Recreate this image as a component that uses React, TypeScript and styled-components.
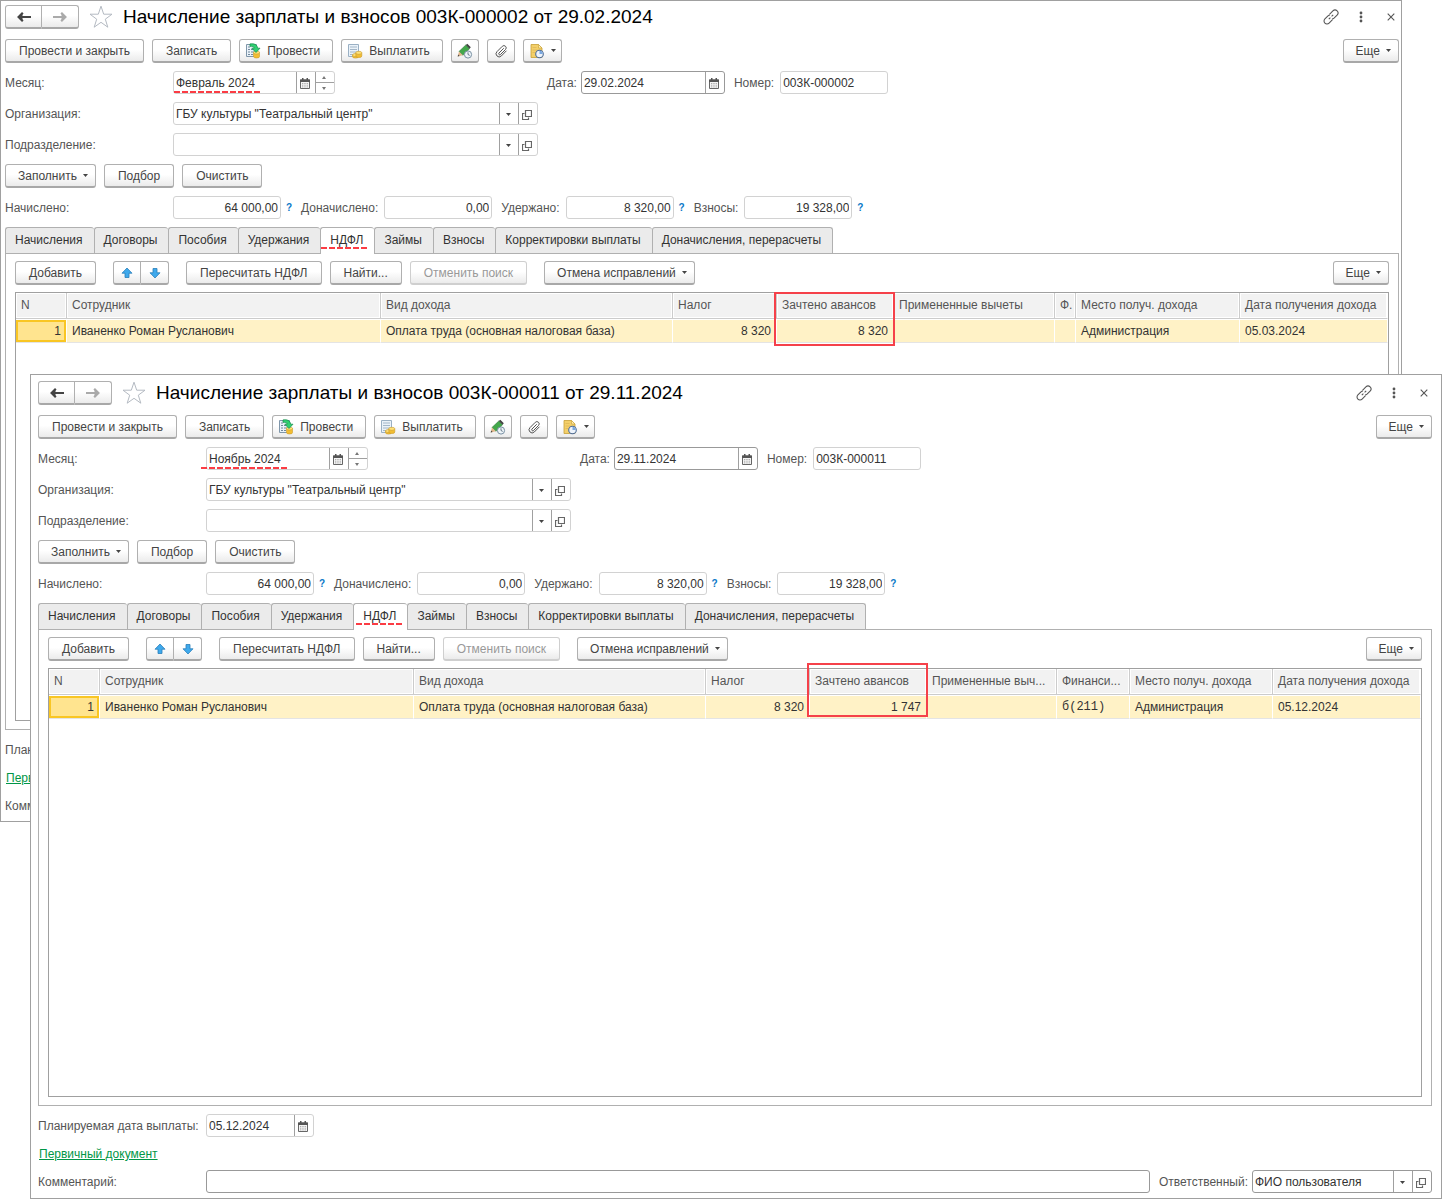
import React, { useId } from "react";
import styled, { createGlobalStyle, css } from "styled-components";

const GlobalStyle = createGlobalStyle`
  *, *::before, *::after { box-sizing: border-box; }
  body { margin: 0; background: #fff; }
  body, button, input, select {
    font-family: "Liberation Sans", Arial, sans-serif;
    font-size: 12px;
    line-height: 16px;
    color: #333;
  }
`;

/* ---------- desktop and windows ---------- */

const Desktop = styled.main`
  display: grid;
  grid-template-columns: minmax(0, 1fr);
`;

const Window = styled.section<{ $front?: boolean }>`
  grid-area: 1 / 1;
  align-self: start;
  isolation: isolate;
  z-index: ${(p) => (p.$front ? 2 : 1)};
  display: flex;
  flex-direction: column;
  gap: 8px;
  background: #fff;
  border: 1px solid #a0a0a0;
  ${(p) =>
    p.$front
      ? css`
          margin: 374px 0 0 30px;
          padding: 4px 9px 5px 7px;
        `
      : css`
          margin: 0 40px 0 0;
          padding: 2px 2px 4px 4px;
        `}
`;

const Header = styled.header`
  display: flex;
  align-items: center;
  height: 28px;
`;

const Title = styled.h1`
  margin: 0;
  flex: 1;
  font-size: 19px;
  line-height: 24px;
  font-weight: 400;
  color: #000;
  white-space: nowrap;
`;

const IconButton = styled.button`
  display: flex;
  align-items: center;
  justify-content: center;
  width: 30px;
  height: 24px;
  padding: 0;
  border: 0;
  background: none;
`;

const StarButton = styled(IconButton)`
  width: 44px;
`;

const WindowTools = styled.div`
  display: flex;
  margin-right: -7px;
`;

/* ---------- buttons ---------- */

const Row = styled.div`
  display: flex;
  align-items: center;
  gap: 8px;
`;

const Spacer = styled.div`
  flex: 1;
`;

const Button = styled.button<{ $menu?: boolean; $icon?: boolean }>`
  display: inline-flex;
  align-items: center;
  justify-content: center;
  flex: none;
  gap: 6px;
  min-width: 28px;
  height: 24px;
  padding: ${(p) => (p.$menu ? "0 7px 0 12px" : p.$icon ? "0 5px" : "0 13px")};
  border: 1px solid #b0b0b0;
  border-bottom: 2px solid #a8a8a8;
  border-radius: 3px;
  background: linear-gradient(#fff 45%, #ebebeb);
  color: #444;
  white-space: nowrap;

  &:disabled {
    color: #999;
    border-color: #cfcfcf;
  }
`;

const LabeledIconButton = styled(Button)`
  padding: 0 12px 0 5px;
`;

const ButtonPair = styled.div<{ $narrow?: boolean }>`
  display: flex;
  margin: ${(p) => (p.$narrow ? "0 9px" : "0")};

  ${Button} {
    width: ${(p) => (p.$narrow ? "28px" : "37px")};
    padding: 0;
  }
  ${Button}:first-child {
    border-top-right-radius: 0;
    border-bottom-right-radius: 0;
  }
  ${Button}:last-child {
    border-left: 0;
    border-top-left-radius: 0;
    border-bottom-left-radius: 0;
  }
`;

const SpacedButton = styled(Button)`
  margin-left: 9px;
`;

/* ---------- fields ---------- */

const FormRow = styled.div`
  display: flex;
  align-items: center;
  height: 23px;
`;

const Label = styled.label<{ $lead?: boolean; $loose?: boolean }>`
  flex: none;
  width: ${(p) => (p.$lead ? "168px" : "auto")};
  margin-left: ${(p) => (p.$lead ? "0" : "9px")};
  margin-right: ${(p) => (p.$lead ? "0" : p.$loose ? "6px" : "4px")};
  color: #555;
  white-space: nowrap;
`;

const FieldBox = styled.div<{ $w?: number; $dark?: boolean }>`
  position: relative;
  display: flex;
  flex: ${(p) => (p.$w ? "none" : "1")};
  width: ${(p) => (p.$w ? `${p.$w}px` : "auto")};
  height: 23px;
  border: 1px solid ${(p) => (p.$dark ? "#999" : "#d2d2d2")};
  border-radius: 3px;
  background: #fff;
`;

const MonthArea = styled.div`
  width: 365px;
`;

const Input = styled.input<{ $right?: boolean }>`
  flex: 1;
  min-width: 0;
  height: 21px;
  padding: 0 2px;
  border: 0;
  outline: 0;
  background: none;
  text-align: ${(p) => (p.$right ? "right" : "left")};
`;

const SelectGrid = styled.div`
  flex: 1;
  display: grid;
  grid-template-columns: 1fr 19px;
`;

const Select = styled.select`
  grid-area: 1 / 1 / 2 / 3;
  appearance: none;
  height: 21px;
  padding: 0 22px 0 2px;
  border: 0;
  outline: 0;
  background: none;
`;

const SelectArrow = styled.span`
  grid-area: 1 / 2;
  display: flex;
  align-items: center;
  justify-content: center;
  padding: 1px 2px 0 0;
  border-left: 1px solid #a0a0a0;
  pointer-events: none;
`;

const FieldButton = styled.button`
  display: flex;
  align-items: center;
  justify-content: center;
  width: 19px;
  padding: 2px 2px 0 0;
  border: 0;
  border-left: 1px solid #a0a0a0;
  background: none;
`;

const Stepper = styled.div`
  display: grid;
  grid-template-rows: 11px 10px;
  width: 19px;
  border-left: 1px solid #a0a0a0;
`;

const StepButton = styled.button`
  display: flex;
  align-items: center;
  justify-content: center;
  padding: 1px 2px 0 0;
  border: 0;
  background: none;

  &:first-child {
    border-bottom: 1px solid #a0a0a0;
  }
`;

const Help = styled.button`
  width: 11px;
  padding: 0;
  border: 0;
  background: none;
  color: #0a78c8;
  font-size: 10px;
  font-weight: 700;
  text-align: right;
`;

const DashMark = styled.span<{ $x: number; $w: number }>`
  position: absolute;
  left: ${(p) => p.$x}px;
  bottom: 0;
  width: ${(p) => p.$w}px;
  height: 2px;
  background: repeating-linear-gradient(90deg, #fb3c44 0 6px, transparent 6px 8px);
`;

/* ---------- tabs and panel ---------- */

const TabBlock = styled.div`
  display: flex;
  flex-direction: column;
`;

const TabList = styled.div`
  display: flex;
  height: 26px;
`;

const Tab = styled.button<{ $active?: boolean }>`
  position: relative;
  flex: none;
  height: ${(p) => (p.$active ? "27px" : "26px")};
  padding: ${(p) => (p.$active ? "0 11px 2px 9px" : "0 11px 1px 9px")};
  border: 1px solid #b0b0b0;
  border-width: 1px 0 0 1px;
  border-radius: 3px 3px 0 0;
  background: ${(p) => (p.$active ? "#fff" : "#ebebeb")};
  white-space: nowrap;

  &:last-child {
    border-right-width: 1px;
  }
`;

const TabMark = styled(DashMark)`
  bottom: 5px;
`;

const Panel = styled.div`
  display: flex;
  flex-direction: column;
  gap: 7px;
  padding: 7px 9px 8px;
  border: 1px solid #b0b0b0;
`;

const TableBox = styled.div`
  min-height: 429px;
  border: 1px solid #a0a0a0;
`;

const Table = styled.table`
  width: 100%;
  table-layout: fixed;
  border-collapse: separate;
  border-spacing: 0;
`;

const HeadCell = styled.th`
  position: relative;
  height: 26px;
  padding: 0 4px 2px 5px;
  border-right: 1px solid #ccc;
  border-bottom: 1px solid #ccc;
  background: #f2f2f2;
  box-shadow: inset 0 0 0 1px #fff;
  color: #555;
  font-weight: 400;
  text-align: left;
  white-space: nowrap;

  &:last-child {
    border-right-color: #fff;
  }
`;

const Cell = styled.td<{ $right?: boolean; $mono?: boolean }>`
  height: 24px;
  padding: 0 5px;
  border-right: 1px solid #fff;
  border-bottom: 1px solid #e4e4e4;
  background: #fff2c6;
  box-shadow: inset 0 1px #fff;
  text-align: ${(p) => (p.$right ? "right" : "left")};
  white-space: nowrap;
  ${(p) => p.$mono && css`font-family: "Liberation Mono", monospace;`}
`;

const CurrentCell = styled(Cell)`
  background: #ffe48f;
  box-shadow: inset 0 1px #fff, inset 0 0 0 2px #f9c623, inset 0 3px #f9c623;
`;

const Highlight = styled.span<{ $raised?: boolean }>`
  position: absolute;
  z-index: 1;
  top: ${(p) => (p.$raised ? "-6px" : "-1px")};
  left: -3px;
  right: -2px;
  height: 54px;
  border: 2px solid #f5414a;
  pointer-events: none;
`;

/* ---------- footer ---------- */

const LinkRow = styled.div`
  height: 17px;
  padding: 1px 0 0 1px;
`;

const DocLink = styled.a`
  color: #009646;
`;

/* ---------- icons ---------- */

const Caret = () => (
  <svg width="5" height="3" viewBox="0 0 5 3" aria-hidden>
    <path d="M0 0h5L2.5 3z" fill="#444" />
  </svg>
);

const StepIcon = ({ down }: { down?: boolean }) => (
  <svg width="4" height="3" viewBox="0 0 4 3" aria-hidden>
    <path d={down ? "M0 0h4L2 3z" : "M0 3h4L2 0z"} fill="#777" />
  </svg>
);

const NavArrow = ({ forward }: { forward?: boolean }) => (
  <svg width="16" height="12" viewBox="0 0 16 12" aria-hidden>
    <path
      d="M15 6H4M6.800 1.800 2.600 6 6.800 10.200"
      transform={forward ? "rotate(180 8 6)" : undefined}
      fill="none"
      stroke={forward ? "#aaa" : "#444"}
      strokeWidth="2.2"
    />
    <path
      d="M2 6 6.500 2.500v7z"
      transform={forward ? "rotate(180 8 6)" : undefined}
      fill={forward ? "#aaa" : "#444"}
    />
  </svg>
);

const Star = () => (
  <svg width="24" height="24" viewBox="0 0 24 24" aria-hidden>
    <path
      d="M12 1.2 14.7 9.2H23L16.3 14.2 18.8 22.2 12 17.3 5.2 22.2 7.7 14.2 1 9.2H9.3z"
      fill="#fff"
      stroke="#b4bac2"
      strokeWidth="1"
    />
  </svg>
);

const ChainIcon = () => (
  <svg width="16" height="16" viewBox="0 0 16 16" fill="none" stroke="#555" strokeWidth="1.1" aria-hidden>
    <path d="M6.500 5.300 9.900 1.900a2.900 2.900 0 0 1 4.200 4.200L11 9.200a2.900 2.900 0 0 1-2 .8" />
    <path d="M9.500 10.700 6.100 14.100a2.900 2.900 0 0 1-4.200-4.200L5 6.800a2.900 2.900 0 0 1 2-.8" />
    <path d="M5.800 10.200 7.400 8.600M8.600 7.400 10.200 5.800" />
  </svg>
);

const DotsIcon = () => (
  <svg width="4" height="12" viewBox="0 0 4 12" fill="#555" aria-hidden>
    <circle cx="2" cy="2" r="1.4" />
    <circle cx="2" cy="6" r="1.4" />
    <circle cx="2" cy="10" r="1.4" />
  </svg>
);

const CloseIcon = () => (
  <svg width="8" height="8" viewBox="0 0 8 8" stroke="#555" strokeWidth="1.1" aria-hidden>
    <path d="M.7.7l6.6 6.6M7.3.7.7 7.3" />
  </svg>
);

const Sheet = () => (
  <>
    <path d="M1.5 1.5h10v12h-10z" fill="#eaf2f9" stroke="#9ab0c4" />
    <path d="M3 4h7M3 6.500h7M3 9h7M3 11.500h6" stroke="#a3b6c8" strokeWidth="1" />
  </>
);

const Coins = ({ x, y, rows }: { x: number; y: number; rows: number }) => (
  <g stroke="#c99a2c" strokeWidth=".6">
    <path d={`M${x} ${y}v${rows}a3 1.500 0 0 0 6 0v-${rows}z`} fill="#f2bd32" />
    <ellipse cx={x + 3} cy={y} rx="3" ry="1.500" fill="#ffe27a" />
  </g>
);

const PostIcon = () => (
  <svg width="16" height="16" viewBox="0 0 16 16" aria-hidden>
    <path d="M1.500 1.500h10v12h-10z" fill="#eaf2f9" stroke="#7f96aa" />
    <path d="M3 4h2M3 6.500h2M3 9h2M3 11.500h2M6 6.500h3M6 9h3M6 11.500h2" stroke="#71889c" />
    <Coins x={8.5} y={9.5} rows={4} />
    <path d="M5 .900c4-.6 7.300.6 7.600 4.300H15L11 9.500 6.800 5.200h2.400C9 3.700 7.600 3.200 5 3.400z" fill="#2fd070" stroke="#128a49" strokeWidth=".7" />
  </svg>
);

const PayIcon = () => (
  <svg width="16" height="16" viewBox="0 0 16 16" aria-hidden>
    <Sheet />
    <Coins x={5.5} y={12} rows={1.6} />
    <Coins x={8.8} y={9.8} rows={3.2} />
  </svg>
);

const PencilClockIcon = () => (
  <svg width="16" height="16" viewBox="0 0 16 16" aria-hidden>
    <path d="M2 8.500 8.800 2l3.700 3.700-6.700 6.600z" fill="#43a84b" stroke="#2a7434" strokeWidth=".6" />
    <path d="M8.800 2 10.300.7l3.500 3.600-1.300 1.400z" fill="#444" />
    <path d="M2 8.500.7 13.400 5.800 12.300z" fill="#e2b68a" />
    <path d="M.7 13.400 1.200 11.600 2.600 13z" fill="#444" />
    <circle cx="11" cy="11.500" r="3.600" fill="#eef4f8" stroke="#7890a2" />
    <path d="M11 9.300v2.200l1.700.9" fill="none" stroke="#566b7c" strokeWidth=".9" />
  </svg>
);

const ClipIcon = () => (
  <svg width="14" height="14" viewBox="0 0 14 14" fill="none" stroke="#555" strokeWidth="1" strokeLinecap="round" aria-hidden>
    <path d="M9.500 4.500 5 9a1 1 0 0 0 1.500 1.500l5-5a2.200 2.200 0 0 0-3.200-3.200L3 7.600A3 3 0 0 0 7.300 12l4.900-5" />
  </svg>
);

const NoteClockIcon = () => (
  <svg width="16" height="16" viewBox="0 0 16 16" aria-hidden>
    <path d="M2 1.500h7.500L13 5v9.500H2z" fill="#f3cf69" stroke="#c79f35" strokeWidth=".8" />
    <path d="M9.500 1.500V5H13z" fill="#fff0b4" stroke="#c79f35" strokeWidth=".6" />
    <path d="M3.500 4.500h4M3.500 7h5M3.500 9.500h3" stroke="#e3bc5a" />
    <circle cx="10.500" cy="11" r="3.800" fill="#edf3fb" stroke="#4c6b96" strokeWidth="1.100" />
    <path d="M10.500 11V7.800a3.200 3.200 0 0 1 3.200 3.200z" fill="#7aa8e0" />
  </svg>
);

const CalendarIcon = () => (
  <svg width="10" height="11" viewBox="0 0 10 11" aria-hidden>
    <path d="M.5 2h9v8.500h-9z" fill="#f4f4f4" stroke="#666" />
    <path d="M0 1.500h10V4H0zM2 0h1.500v2H2zM6.500 0H8v2H6.500z" fill="#555" />
    <path d="M2 5.500h6M2 7.200h6M2 8.900h6" stroke="#aaa" strokeDasharray="1 .7" />
  </svg>
);

const OpenIcon = () => (
  <svg width="10" height="10" viewBox="0 0 10 10" fill="none" stroke="#666" aria-hidden>
    <path d="M3.500.5h6v6h-6z" strokeWidth="1.200" />
    <path d="M2.500 3.500h-2v6h6v-2" strokeWidth="1.200" />
  </svg>
);

const BlueArrow = ({ down }: { down?: boolean }) => (
  <svg width="12" height="12" viewBox="0 0 12 12" aria-hidden>
    <path
      d="M6 1 11 6.200H8V10.500H4V6.200H1z"
      transform={down ? "rotate(180 6 6)" : undefined}
      fill="#3fa9ec"
      stroke="#2a7fba"
      strokeWidth=".8"
      strokeLinejoin="round"
    />
  </svg>
);

/* ---------- form parts ---------- */

type SelectFieldProps = { id: string; value: string; width: number; dark?: boolean };

const SelectField = ({ id, value, width, dark }: SelectFieldProps) => (
  <FieldBox $w={width} $dark={dark}>
    <SelectGrid>
      <Select id={id} defaultValue={value}>
        <option value={value}>{value}</option>
      </Select>
      <SelectArrow>
        <Caret />
      </SelectArrow>
    </SelectGrid>
    <FieldButton aria-label="Открыть">
      <OpenIcon />
    </FieldButton>
  </FieldBox>
);

type DateFieldProps = { id: string; value: string; width: number; dark?: boolean };

const DateField = ({ id, value, width, dark }: DateFieldProps) => (
  <FieldBox $w={width} $dark={dark}>
    <Input id={id} defaultValue={value} />
    <FieldButton aria-label="Выбрать дату">
      <CalendarIcon />
    </FieldButton>
  </FieldBox>
);

type Total = { label: string; value: string; help?: boolean };

const totals: Total[] = [
  { label: "Начислено:", value: "64 000,00", help: true },
  { label: "Доначислено:", value: "0,00" },
  { label: "Удержано:", value: "8 320,00", help: true },
  { label: "Взносы:", value: "19 328,00", help: true },
];

const tabs = [
  "Начисления",
  "Договоры",
  "Пособия",
  "Удержания",
  "НДФЛ",
  "Займы",
  "Взносы",
  "Корректировки выплаты",
  "Доначисления, перерасчеты",
];

type Mark = { x: number; w: number };

type Doc = {
  number: string;
  date: string;
  month: string;
  payDate: string;
  advances: string;
  finance: string;
  financeHead: string;
  deductionsHead: string;
  deductionsWidth: number;
  financeWidth: number;
  placeWidth: number;
  monthMark: Mark;
  tabMark: Mark;
};

const february: Doc = {
  number: "003К-000002",
  date: "29.02.2024",
  month: "Февраль 2024",
  payDate: "05.03.2024",
  advances: "8 320",
  finance: "",
  financeHead: "Ф.",
  deductionsHead: "Примененные вычеты",
  deductionsWidth: 161,
  financeWidth: 21,
  placeWidth: 164,
  monthMark: { x: 0, w: 86 },
  tabMark: { x: 0, w: 46 },
};

const november: Doc = {
  number: "003К-000011",
  date: "29.11.2024",
  month: "Ноябрь 2024",
  payDate: "05.12.2024",
  advances: "1 747",
  finance: "б(211)",
  financeHead: "Финанси...",
  deductionsHead: "Примененные выч...",
  deductionsWidth: 130,
  financeWidth: 73,
  placeWidth: 143,
  monthMark: { x: -6, w: 86 },
  tabMark: { x: 2, w: 46 },
};

const DocumentWindow = ({ doc, front }: { doc: Doc; front?: boolean }) => {
  const id = useId();
  return (
    <Window $front={front}>
      <Header>
        <ButtonPair>
          <Button aria-label="Назад">
            <NavArrow />
          </Button>
          <Button aria-label="Вперед">
            <NavArrow forward />
          </Button>
        </ButtonPair>
        <StarButton aria-label="В избранное">
          <Star />
        </StarButton>
        <Title>
          Начисление зарплаты и взносов {doc.number} от {doc.date}
        </Title>
        <WindowTools>
          <IconButton aria-label="Ссылка">
            <ChainIcon />
          </IconButton>
          <IconButton aria-label="Меню">
            <DotsIcon />
          </IconButton>
          <IconButton aria-label="Закрыть">
            <CloseIcon />
          </IconButton>
        </WindowTools>
      </Header>

      <Row>
        <Button>Провести и закрыть</Button>
        <Button>Записать</Button>
        <LabeledIconButton>
          <PostIcon />
          Провести
        </LabeledIconButton>
        <LabeledIconButton>
          <PayIcon />
          Выплатить
        </LabeledIconButton>
        <Button $icon aria-label="Отложить">
          <PencilClockIcon />
        </Button>
        <Button $icon aria-label="Файлы">
          <ClipIcon />
        </Button>
        <Button $icon aria-label="Создать на основании">
          <NoteClockIcon />
          <Caret />
        </Button>
        <Spacer />
        <Button $menu>
          Еще <Caret />
        </Button>
      </Row>

      <FormRow>
        <Label $lead htmlFor={`${id}month`}>
          Месяц:
        </Label>
        <MonthArea>
          <FieldBox $w={162}>
            <Input id={`${id}month`} defaultValue={doc.month} />
            <FieldButton aria-label="Выбрать месяц">
              <CalendarIcon />
            </FieldButton>
            <Stepper>
              <StepButton aria-label="Следующий месяц">
                <StepIcon />
              </StepButton>
              <StepButton aria-label="Предыдущий месяц">
                <StepIcon down />
              </StepButton>
            </Stepper>
            <DashMark $x={doc.monthMark.x} $w={doc.monthMark.w} />
          </FieldBox>
        </MonthArea>
        <Label htmlFor={`${id}date`}>Дата:</Label>
        <DateField id={`${id}date`} value={doc.date} width={144} dark />
        <Label $loose htmlFor={`${id}number`}>
          Номер:
        </Label>
        <FieldBox $w={108}>
          <Input id={`${id}number`} defaultValue={doc.number} />
        </FieldBox>
      </FormRow>

      <FormRow>
        <Label $lead htmlFor={`${id}org`}>
          Организация:
        </Label>
        <SelectField id={`${id}org`} value={'ГБУ культуры "Театральный центр"'} width={365} />
      </FormRow>

      <FormRow>
        <Label $lead htmlFor={`${id}unit`}>
          Подразделение:
        </Label>
        <SelectField id={`${id}unit`} value="" width={365} />
      </FormRow>

      <Row>
        <Button $menu>
          Заполнить <Caret />
        </Button>
        <Button>Подбор</Button>
        <Button>Очистить</Button>
      </Row>

      <FormRow>
        {totals.map((t, i) => (
          <React.Fragment key={t.label}>
            <Label $lead={i === 0} $loose htmlFor={`${id}total${i}`}>
              {t.label}
            </Label>
            <FieldBox $w={108}>
              <Input id={`${id}total${i}`} $right readOnly value={t.value} />
            </FieldBox>
            {t.help && <Help>?</Help>}
          </React.Fragment>
        ))}
      </FormRow>

      <TabBlock>
        <TabList role="tablist">
          {tabs.map((name) => (
            <Tab key={name} role="tab" aria-selected={name === "НДФЛ"} $active={name === "НДФЛ"}>
              {name}
              {name === "НДФЛ" && <TabMark $x={doc.tabMark.x} $w={doc.tabMark.w} />}
            </Tab>
          ))}
        </TabList>
        <Panel role="tabpanel">
          <Row>
            <Button>Добавить</Button>
            <ButtonPair $narrow>
              <Button aria-label="Вверх">
                <BlueArrow />
              </Button>
              <Button aria-label="Вниз">
                <BlueArrow down />
              </Button>
            </ButtonPair>
            <Button>Пересчитать НДФЛ</Button>
            <Button>Найти...</Button>
            <Button disabled>Отменить поиск</Button>
            <SpacedButton $menu>
              Отмена исправлений <Caret />
            </SpacedButton>
            <Spacer />
            <Button $menu>
              Еще <Caret />
            </Button>
          </Row>
          <TableBox>
            <Table>
              <colgroup>
                <col width={51} />
                <col />
                <col width={292} />
                <col width={104} />
                <col width={117} />
                <col width={doc.deductionsWidth} />
                <col width={doc.financeWidth} />
                <col width={doc.placeWidth} />
                <col width={148} />
              </colgroup>
              <thead>
                <tr>
                  <HeadCell>N</HeadCell>
                  <HeadCell>Сотрудник</HeadCell>
                  <HeadCell>Вид дохода</HeadCell>
                  <HeadCell>Налог</HeadCell>
                  <HeadCell>
                    Зачтено авансов
                    <Highlight $raised={front} />
                  </HeadCell>
                  <HeadCell>{doc.deductionsHead}</HeadCell>
                  <HeadCell>{doc.financeHead}</HeadCell>
                  <HeadCell>Место получ. дохода</HeadCell>
                  <HeadCell>Дата получения дохода</HeadCell>
                </tr>
              </thead>
              <tbody>
                <tr>
                  <CurrentCell $right>1</CurrentCell>
                  <Cell>Иваненко Роман Русланович</Cell>
                  <Cell>Оплата труда (основная налоговая база)</Cell>
                  <Cell $right>8 320</Cell>
                  <Cell $right>{doc.advances}</Cell>
                  <Cell />
                  <Cell $mono>{doc.finance}</Cell>
                  <Cell>Администрация</Cell>
                  <Cell>{doc.payDate}</Cell>
                </tr>
              </tbody>
            </Table>
          </TableBox>
        </Panel>
      </TabBlock>

      <FormRow>
        <Label $lead htmlFor={`${id}pay`}>
          Планируемая дата выплаты:
        </Label>
        <DateField id={`${id}pay`} value={doc.payDate} width={108} />
      </FormRow>

      <LinkRow>
        <DocLink href="#document">Первичный документ</DocLink>
      </LinkRow>

      <FormRow>
        <Label $lead htmlFor={`${id}comment`}>
          Комментарий:
        </Label>
        <FieldBox $dark>
          <Input id={`${id}comment`} />
        </FieldBox>
        <Label htmlFor={`${id}owner`}>Ответственный:</Label>
        <SelectField id={`${id}owner`} value="ФИО пользователя" width={180} dark />
      </FormRow>
    </Window>
  );
};

export default function App() {
  return (
    <>
      <GlobalStyle />
      <Desktop>
        <DocumentWindow doc={february} />
        <DocumentWindow doc={november} front />
      </Desktop>
    </>
  );
}
